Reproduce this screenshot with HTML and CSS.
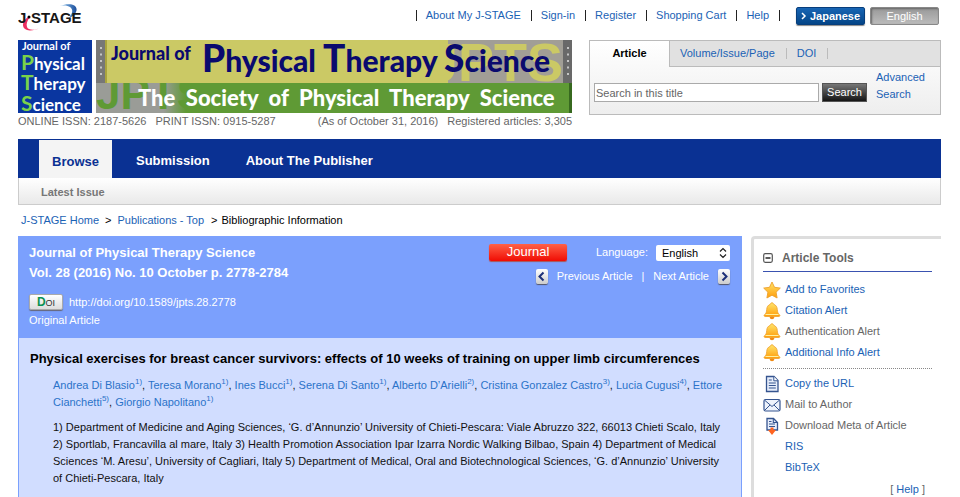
FILE: index.html
```html
<!DOCTYPE html>
<html lang="en">
<head>
<meta charset="utf-8">
<title>Journal of Physical Therapy Science</title>
<link rel="stylesheet" href="styles.css">
</head>
<body>
<svg class="defs" aria-hidden="true">
  <defs>
    <linearGradient id="gold" x1="0" y1="0" x2="0" y2="1"><stop offset="0" stop-color="#ffe56a"/><stop offset="1" stop-color="#ff9d0a"/></linearGradient>
    <linearGradient id="swooshBlue" x1="0" x2="1"><stop offset="0" stop-color="#8cc4ee"/><stop offset="1" stop-color="#1d4f9c"/></linearGradient>
    <symbol id="bell" viewBox="0 0 18 18"><ellipse cx="9" cy="15.600" rx="2.200" ry="1.600" fill="#f08a12"/><path d="M9 .8c.9 0 1.500.6 1.500 1.400 2.600.8 3.600 2.700 3.800 5.300.2 2.500.6 4 2.200 5.200.7.5.4 1.800-.6 1.800H2.100c-1 0-1.300-1.300-.6-1.800 1.600-1.200 2-2.700 2.200-5.200.2-2.600 1.200-4.500 3.800-5.300C7.500 1.400 8.100.8 9 .8z" fill="url(#gold)" stroke="#eda02c" stroke-width=".8"/><path d="M2.500 12.500h13" stroke="#fff0a0"/></symbol>
    <symbol id="page" viewBox="0 0 18 18"><path d="M3.500 1.500h7.500l4 4v11H3.500z" fill="#e7eefb" stroke="#35548f" stroke-width="1.300"/><path d="M10.800 1.500v4.300H15" fill="#fff" stroke="#35548f"/><path d="M5.800 5h3M5.800 8h7M5.800 10.500h7M5.800 13h7" stroke="#35548f" stroke-width="1.200"/></symbol>
  </defs>
</svg>
<div class="page">
  <header>
    <div class="topbar">
      <a class="logo" href="#" aria-label="J-STAGE">
        <svg width="68" height="30" viewBox="0 0 68 30">
          <path d="M42 3C52-1 61 2 58 9c-1 3-4 5-7 6 3-4 5-8 1-11-2-1-5-2-10-1z" fill="url(#swooshBlue)"/>
          <path d="M10 14C4 18 3 25 9 27c3 1 9 0 13-2-6 3-12 2-13-1-1-3 0-6 3-10z" fill="#ed2f60"/>
          <text x="0" y="20" class="logo-text">J</text>
          <circle cx="11" cy="14" r="1.500"/>
          <text x="13" y="20" class="logo-text">STAGE</text>
        </svg>
      </a>
      <nav class="toplinks">
        <a href="#">About My J-STAGE</a><a href="#">Sign-in</a><a href="#">Register</a><a href="#">Shopping Cart</a><a href="#">Help</a>
      </nav>
      <div class="langs">
        <button class="lang ja"><svg width="6" height="8" viewBox="0 0 6 8"><path d="M1 1l3 3-3 3" fill="none" stroke="#fff" stroke-width="1.500"/></svg>Japanese</button>
        <button class="lang en">English</button>
      </div>
    </div>
    <div class="masthead">
      <div class="journal">
        <svg class="banner" viewBox="0 0 554 73" role="img" aria-label="Journal of Physical Therapy Science">
          <defs><linearGradient id="greyfade"><stop offset="0" stop-color="#9a9c97"/><stop offset=".75" stop-color="#9a9c97"/><stop offset="1" stop-color="#5f9a35"/></linearGradient></defs>
          <rect width="74" height="73" fill="#0a36a0"/>
          <g class="cover">
            <text x="4" y="10" class="small">Journal of</text>
            <text x="3" y="30"><tspan class="cap">P</tspan>hysical</text>
            <text x="3" y="50"><tspan class="cap">T</tspan>herapy</text>
            <text x="3" y="71"><tspan class="cap">S</tspan>cience</text>
          </g>
          <rect x="78" width="476" height="43" fill="#cbc965"/>
          <rect x="78" y="43" width="476" height="30" fill="#5f9a35"/>
          <rect x="430" width="115" height="43" fill="#a19e96"/>
          <rect x="78" y="43" width="90" height="30" fill="url(#greyfade)"/>
          <svg x="410" y="0" width="135" height="43" aria-hidden="true"><text x="0" y="41" class="mark olive">JPTS</text></svg>
          <svg x="78" y="43" width="130" height="30" aria-hidden="true"><text x="0" y="26" class="mark green">JPTS</text></svg>
          <rect x="78" width="9" height="43" fill="#777"/>
          <rect x="87" width="2" height="43" fill="#aaa43d"/>
          <rect x="545" width="9" height="43" fill="#696969"/>
          <rect x="551" y="43" width="3" height="30" fill="#37691f"/>
          <path d="M83 7v32M550 7v32" stroke="#c5c5c5" stroke-width="2" stroke-dasharray="2 4.500"/>
          <g class="title">
            <text x="93" y="20" class="title-small">Journal of</text>
            <text x="184" y="32"><tspan class="big">P</tspan>hysical <tspan class="big">T</tspan>herapy <tspan class="big">S</tspan>cience</text>
          </g>
          <text x="120" y="66" class="society">The&nbsp; Society&nbsp; of&nbsp; Physical&nbsp; Therapy&nbsp; Science</text>
        </svg>
        <div class="issn"><span>ONLINE ISSN: 2187-5626</span><span>PRINT ISSN: 0915-5287</span><span class="asof">(As of October 31, 2016)</span><span>Registered articles: 3,305</span></div>
      </div>
      <form class="search">
        <div class="tabs"><strong>Article</strong><div class="othertabs"><a href="#">Volume/Issue/Page</a><a href="#">DOI</a></div></div>
        <div class="searchrow"><input type="text" aria-label="Search in this title" placeholder="Search in this title"><button type="button">Search</button><a href="#">Advanced Search</a></div>
      </form>
    </div>
  </header>
  <nav class="mainnav"><a class="current" href="#">Browse</a><a href="#">Submission</a><a href="#">About The Publisher</a></nav>
  <div class="subnav"><a href="#">Latest Issue</a></div>
  <div class="crumbs"><a href="#">J-STAGE Home</a><span class="sep">&gt;</span><a href="#">Publications - Top</a><span class="sep last">&gt;</span><span>Bibliographic Information</span></div>
  <main>
    <article>
      <div class="articlehead">
        <div>
          <h2>Journal of Physical Therapy Science<br>Vol. 28 (2016) No. 10 October p. 2778-2784</h2>
          <p class="doi"><span class="doibadge"><b>D</b>OI</span><a href="#">http://doi.org/10.1589/jpts.28.2778</a></p>
          <p class="kind">Original Article</p>
        </div>
        <div class="controls">
          <div class="controlrow">
            <span class="journaltag">Journal</span>
            <label for="language">Language:</label>
            <span class="selectwrap"><select id="language"><option>English</option></select><svg width="8" height="12" viewBox="0 0 8 12"><path d="M1 4.500l3-3 3 3M1 7.500l3 3 3-3" fill="none" stroke="#222" stroke-width="1.200"/></svg></span>
          </div>
          <div class="pager">
            <a href="#"><svg class="step" viewBox="0 0 12 15"><path d="M7.500 3.500l-4 4 4 4" fill="none" stroke="#1c2f78" stroke-width="2"/></svg>Previous Article</a><span>|</span><a href="#">Next Article<svg class="step" viewBox="0 0 12 15"><path d="M4.500 3.500l4 4-4 4" fill="none" stroke="#1c2f78" stroke-width="2"/></svg></a>
          </div>
        </div>
      </div>
      <div class="articlebody">
        <h1>Physical exercises for breast cancer survivors: effects of 10 weeks of training on upper limb circumferences</h1>
        <p class="authors"><a href="#">Andrea Di Blasio<sup>1)</sup></a>, <a href="#">Teresa Morano<sup>1)</sup></a>, <a href="#">Ines Bucci<sup>1)</sup></a>, <a href="#">Serena Di Santo<sup>1)</sup></a>, <a href="#">Alberto D’Arielli<sup>2)</sup></a>, <a href="#">Cristina Gonzalez Castro<sup>3)</sup></a>, <a href="#">Lucia Cugusi<sup>4)</sup></a>, <a href="#">Ettore Cianchetti<sup>5)</sup></a>, <a href="#">Giorgio Napolitano<sup>1)</sup></a></p>
        <p class="affiliations">1) Department of Medicine and Aging Sciences, ‘G. d’Annunzio’ University of Chieti-Pescara: Viale Abruzzo 322, 66013 Chieti Scalo, Italy 2) Sportlab, Francavilla al mare, Italy 3) Health Promotion Association Ipar Izarra Nordic Walking Bilbao, Spain 4) Department of Medical Sciences ‘M. Aresu’, University of Cagliari, Italy 5) Department of Medical, Oral and Biotechnological Sciences, ‘G. d’Annunzio’ University of Chieti-Pescara, Italy</p>
      </div>
    </article>
    <aside>
      <h3><svg width="10" height="10" viewBox="0 0 10 10"><rect x=".7" y=".7" width="8.600" height="8.600" rx="1.500" fill="#fff" stroke="#555" stroke-width="1.200"/><path d="M2.500 5h5" stroke="#333" stroke-width="1.600"/></svg>Article Tools</h3>
      <ul class="alerts">
        <li><svg viewBox="0 0 18 18"><path d="M9 1l2.500 5.300 5.800.8-4.200 4.100 1 5.800L9 14.200 3.900 17l1-5.800L.7 7.100l5.800-.8z" fill="url(#gold)" stroke="#eda02c" stroke-width=".9" stroke-linejoin="round"/></svg><a href="#">Add to Favorites</a></li>
        <li><svg><use href="#bell"/></svg><a href="#">Citation Alert</a></li>
        <li><svg><use href="#bell"/></svg><span>Authentication Alert</span></li>
        <li><svg><use href="#bell"/></svg><a href="#">Additional Info Alert</a></li>
      </ul>
      <ul class="exports">
        <li><svg><use href="#page"/></svg><a href="#">Copy the URL</a></li>
        <li><svg viewBox="0 0 18 18"><rect x="1" y="3.500" width="16" height="11.500" rx="1.500" fill="#eef3fc" stroke="#35548f" stroke-width="1.200"/><path d="M2 4.500l7 6 7-6M2 14l5-5M16 14l-5-5" fill="none" stroke="#35548f"/></svg><span>Mail to Author</span></li>
        <li><svg viewBox="0 0 18 18"><path d="M4 1.500h6.500l4 4v7.500H4z" fill="#e7eefb" stroke="#35548f" stroke-width="1.300"/><path d="M10.300 1.500v4h4M6 4.500h2.500M6 7h6M6 9.500h6" fill="none" stroke="#35548f" stroke-width="1.100"/><path d="M7.500 10.500h3v2.500h2.500L9 18l-4-5h2.500z" fill="#ff6420"/></svg><span>Download Meta of Article</span></li>
        <li><a class="indent" href="#">RIS</a></li>
        <li><a class="indent" href="#">BibTeX</a></li>
      </ul>
      <p class="help">[ <a href="#">Help</a> ]</p>
    </aside>
  </main>
</div>
</body>
</html>
```
FILE: styles.css
```css
* { box-sizing: border-box; }
body {
  margin: 0;
  font: 11px/17px "Liberation Sans", Arial, sans-serif;
  color: #111;
  background: #fff;
}
a { color: #1b62b5; text-decoration: none; }
h1, h2, h3, p, ul { margin: 0; padding: 0; }
ul { list-style: none; }
button, input, select { font: inherit; }
.defs { position: absolute; width: 0; height: 0; }

.page {
  display: flex;
  flex-direction: column;
  min-height: 100vh;
  padding: 0 19px 0 18px;
}

.topbar { display: flex; align-items: flex-start; height: 40px; }
.logo { padding-top: 3px; }
.logo svg { display: block; }
.logo-text { font: bold 15px "Liberation Sans", Arial, sans-serif; fill: #161616; }
.toplinks { display: flex; margin-left: auto; padding-top: 7px; }
.toplinks a { display: flex; align-items: center; }
.toplinks a::before,
.toplinks a:last-child::after {
  content: "";
  width: 1px;
  height: 11px;
  margin: 0 9px 0 10px;
  background: #222;
}
.toplinks a:last-child::after { margin-right: 16px; }
.langs { display: flex; gap: 5px; padding: 7px 2px 0 0; }
.lang {
  display: flex;
  align-items: center;
  justify-content: center;
  gap: 3px;
  width: 69px;
  height: 18px;
  padding: 0;
  border: 1px solid #073e7c;
  border-radius: 2px;
  font-weight: bold;
  color: #fff;
}
.ja { background: linear-gradient(#1765b4, #044587); box-shadow: 0 1px 1px #888; }
.en { border-color: #888; background: linear-gradient(#999, #bbb); font-weight: normal; box-shadow: inset 1px 1px 2px #666; }

.masthead { display: grid; grid-template-columns: 554fr 352fr; gap: 17px; align-items: start; }
.banner { display: block; width: 100%; }
.cover text { font: bold 17px Lato, sans-serif; fill: #fff; }
.cover .small { font-size: 11px; }
.cover .cap { font-size: 21px; fill: #7ad24a; }
.title text { font: 900 30px Lato, sans-serif; fill: #0a0a6e; }
.title .title-small { font-size: 18px; }
.title .big { font-size: 37px; }
.society { font: 900 22px Lato, sans-serif; fill: #fff; }
.mark { font: bold 54px "Liberation Sans", Arial, sans-serif; }
.mark.olive { fill: #cbc965; }
.mark.green { fill: #5f9a35; font-size: 44px; }
.issn { display: flex; gap: 9px; color: #666; white-space: nowrap; }
.asof { margin-left: auto; }

.search { height: 75px; border: 1px solid #bbb; background: linear-gradient(#fff, #eee); }
.tabs { display: flex; height: 26px; line-height: 25px; }
.tabs strong { width: 79px; text-align: center; color: #000; }
.othertabs {
  display: flex;
  flex: 1;
  padding-left: 10px;
  border-left: 1px solid #bbb;
  border-bottom: 1px solid #bbb;
  background: #e1e1e1;
}
.othertabs a { display: flex; align-items: center; margin-right: 10px; }
.othertabs a::after { content: ""; width: 1px; height: 11px; margin-left: 11px; background: #bbb; }
.searchrow { display: flex; gap: 3px; padding: 2px 10px 0 4px; }
.searchrow input {
  flex: 1;
  min-width: 0;
  height: 19px;
  margin-top: 14px;
  padding: 0 1px;
  border: 1px solid #aaa;
  background: #fff;
}
.searchrow input::placeholder { color: #666; }
.searchrow button {
  width: 45px;
  height: 19px;
  margin-top: 14px;
  padding: 0;
  border: 1px solid #555;
  background: linear-gradient(#777, #151515);
  color: #fff;
}
.searchrow a { width: 54px; margin-left: 6px; }

.mainnav {
  display: flex;
  height: 39px;
  margin-top: 9px;
  padding-left: 21px;
  background: #0a3193;
  font-size: 13px;
  font-weight: bold;
  line-height: 43px;
}
.mainnav a { padding: 0 12px 0 24px; color: #fff; }
.mainnav .current { height: 38px; margin-top: 1px; padding: 0 13px; background: #f4f4f4; color: #0a3193; }
.subnav {
  height: 27px;
  padding-left: 22px;
  border: 1px solid #ccc;
  border-top: 0;
  background: linear-gradient(#fff, #e9e9e9);
  line-height: 28px;
}
.subnav a { font-weight: bold; color: #777; }
.crumbs { display: flex; height: 31px; padding-left: 3px; line-height: 31px; color: #000; }
.sep { margin: 0 6px; }
.sep.last { margin-left: 7px; margin-right: 4px; }

main { display: grid; grid-template-columns: 724fr 190fr; gap: 9px; flex: 1; }
article { border: 1px solid #7ba0fd; border-bottom: 0; background: #d1ddff; }
.articlehead {
  display: flex;
  justify-content: space-between;
  height: 101px;
  padding: 6px 11px 0 10px;
  background: #7ba0fd;
  color: #fff;
}
.articlehead a { color: #fff; }
h2 { font-size: 13px; line-height: 20px; }
.doi { display: flex; align-items: center; gap: 6px; height: 18px; margin-top: 10px; }
.doibadge {
  width: 34px;
  height: 16px;
  border: 1px solid #aaa;
  border-radius: 2px;
  background: linear-gradient(#fff, #ddd);
  box-shadow: 0 1px 1px #667;
  color: #333;
  font-size: 9px;
  line-height: 14px;
  text-align: center;
}
.doibadge b { color: #0b9152; font-size: 12px; }
.kind { margin-top: 1px; }
.controlrow, .pager { display: flex; align-items: center; justify-content: flex-end; }
.journaltag {
  width: 78px;
  height: 17px;
  margin-right: 29px;
  border-radius: 2px;
  background: linear-gradient(#ff6147, #f00c03);
  box-shadow: 0 1px 1px #a55;
  font-size: 13px;
  line-height: 16px;
  text-align: center;
}
.selectwrap { position: relative; margin-left: 8px; }
.selectwrap svg { position: absolute; top: 2px; right: 3px; pointer-events: none; }
select {
  appearance: none;
  display: block;
  width: 74px;
  height: 16px;
  padding: 0 6px;
  border: 0;
  border-radius: 2px;
  background: #fff;
  color: #000;
}
.controlrow { padding-top: 1px; }
.pager { gap: 9px; margin-top: 7px; }
.pager a { display: flex; align-items: center; gap: 9px; }
.step { width: 12px; height: 15px; border-radius: 2px; background: linear-gradient(#fff, #ccc); box-shadow: 0 1px 1px #556; }
.articlebody { padding: 12px 11px; }
h1 { font-size: 13px; line-height: 17px; color: #000; }
.authors { margin: 10px 6px 0 23px; }
.authors a { color: #2b73c9; }
sup { font-size: 8px; line-height: 0; }
.affiliations { margin: 8px 0 0 23px; }

aside {
  padding: 11px 9px 0;
  border: 3px solid #ddd;
  border-right: 0;
  border-bottom: 0;
  border-radius: 4px 0 0 0;
  color: #666;
}
h3 { display: flex; align-items: center; gap: 9px; height: 22px; padding-bottom: 5px; border-bottom: 1px solid #3a52b0; font-size: 12px; }
.alerts { padding: 7px 0 5px; border-bottom: 1px dotted #888; }
.exports { padding-top: 4px; }
li { display: flex; align-items: center; gap: 4px; height: 21px; }
li svg { width: 18px; height: 18px; }
.indent { margin-left: 22px; }
.help { margin-top: 3px; padding-right: 7px; text-align: right; }
```
